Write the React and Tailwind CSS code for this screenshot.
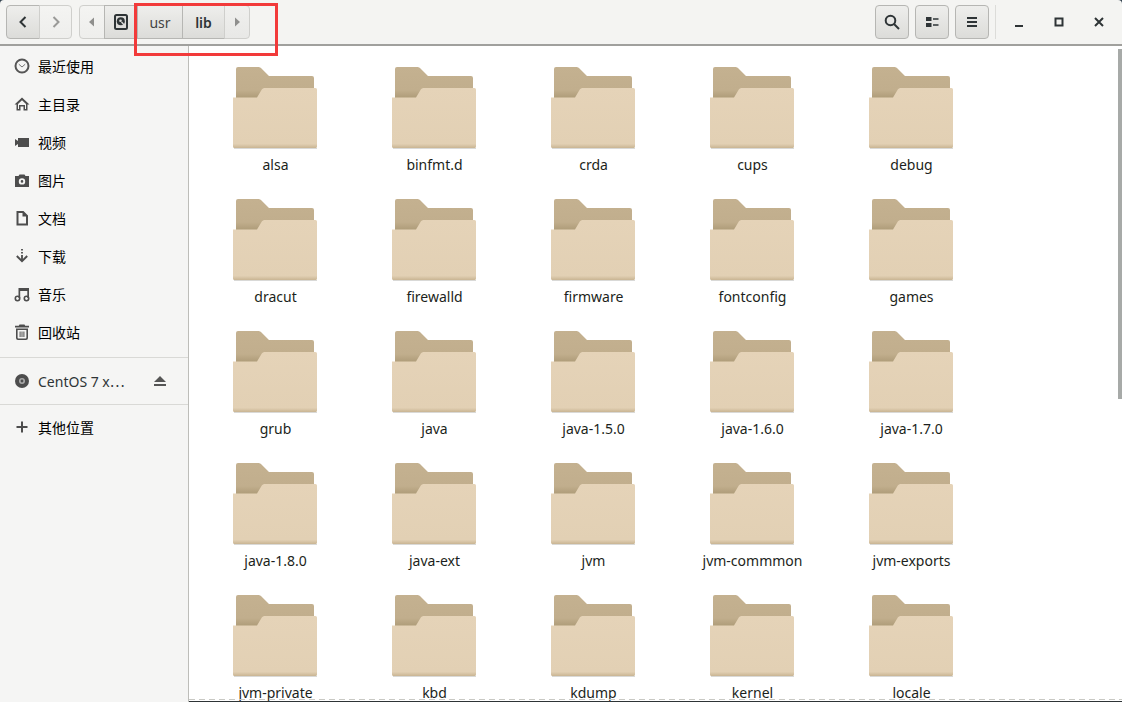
const sans = '"Noto Sans", "Noto Sans CJK SC", sans-serif';

const Folder = () => (
  <svg width="91" height="90" viewBox="0 0 91 90" className="block">
    <defs>
      <linearGradient id="back" x1="0" y1="0" x2="0" y2="1">
        <stop offset="0" stopColor="#c4b190" />
        <stop offset="0.7" stopColor="#c1ae8d" />
        <stop offset="1" stopColor="#a99773" />
      </linearGradient>
      <linearGradient id="front" x1="0" y1="0" x2="0" y2="1">
        <stop offset="0" stopColor="#e5d3b8" />
        <stop offset="0.93" stopColor="#e2d0b4" />
        <stop offset="1" stopColor="#c9b593" />
      </linearGradient>
    </defs>
    <path d="M6 5a2 2 0 0 1 2-2h20c1.500 0 2.500 .5 3.500 1.500L39 12h43a2 2 0 0 1 2 2v22H6Z" fill="url(#back)" />
    <path d="M4 84.500H87" stroke="#b5b5b0" strokeWidth="1" opacity="0.5" />
    <path d="M3 33.500h24l4.500-7.500c.6-1 1.500-2 3-2H85.500a1.500 1.500 0 0 1 1.500 1.500V82.500a1.500 1.500 0 0 1-1.500 1.500H4.500a1.500 1.500 0 0 1-1.500-1.500Z" fill="url(#front)" />
  </svg>
);

const IconWrap = ({ children }) => (
  <svg width="16" height="16" viewBox="0 0 16 16" fill="#4d4d4d" className="block shrink-0">
    {children}
  </svg>
);

const icons = {
  clock: (
    <>
      <circle cx="8" cy="8" r="6.500" fill="none" stroke="#555" strokeWidth="2" />
      <path d="M4.800 6.200 8 9l3.200-2.800" fill="none" stroke="#777" strokeWidth="1" />
    </>
  ),
  home: <path fillRule="evenodd" d="M8 1.500 0.500 8.500H2.500V14.500H6.500V10.500H9.500V14.500H13.500V8.500H15.500ZM8 4.200 4 7.900V13H5V9H11V13H12V7.900Z" />,
  video: <path d="M1 5l3 2V4h11v9H4v-3l-3 2Z" />,
  camera: <path fillRule="evenodd" d="M5.500 2.500h5l1 1.500H15v11H1V4h3.500ZM8 6.200a3.200 3.200 0 1 0 0 6.400 3.200 3.200 0 0 0 0-6.400Zm0 1.900a1.300 1.300 0 1 1 0 2.600 1.300 1.300 0 0 1 0-2.600Z" />,
  file: <path fillRule="evenodd" d="M2.500 1h7L14 5.500V15.500H2.500ZM4.500 3V13.500H12V6.500H8.500V3Z" />,
  download: (
    <>
      <path d="M7.100 1h1.800v1.500H7.100Zm0 3h1.800v1.500H7.100Zm0 3h1.800v5H7.100Z" />
      <path d="M2.800 8 8 13.200 13.200 8" fill="none" stroke="#4d4d4d" strokeWidth="1.900" />
    </>
  ),
  music: (
    <>
      <path d="M4.500 2H15V12H13.300V5H6.200V12H4.500Z" />
      <circle cx="3.500" cy="12.500" r="2.200" fill="none" stroke="#4d4d4d" strokeWidth="1.600" />
      <circle cx="12.500" cy="12.500" r="2.200" fill="none" stroke="#4d4d4d" strokeWidth="1.600" />
    </>
  ),
  trash: <path fillRule="evenodd" d="M5.500 0.500h5l.7 1.200H15v1.800H1V1.700h3.800ZM2 4.500h12V14a2 2 0 0 1-2 2H4a2 2 0 0 1-2-2Zm1.600 1.500V13.500c0 .6.400 1 1 1h6.800c.6 0 1-.4 1-1V6ZM5.600 7.500h1v5.500h-1Zm1.900 0h1v5.500h-1Zm1.900 0h1v5.500h-1Z" />,
  disc: (
    <>
      <circle cx="8" cy="8" r="7" fill="#4d4d4d" />
      <circle cx="8" cy="8" r="3" fill="#aaa" />
      <circle cx="8" cy="8" r="1.400" fill="#4d4d4d" />
    </>
  ),
  plus: <path d="M7 2.500h2V7h4.500v2H9v4.500H7V9H2.500V7H7Z" />,
};

const places = [
  ['clock', '最近使用'],
  ['home', '主目录'],
  ['video', '视频'],
  ['camera', '图片'],
  ['file', '文档'],
  ['download', '下载'],
  ['music', '音乐'],
  ['trash', '回收站'],
];

const folders = [
  'alsa', 'binfmt.d', 'crda', 'cups', 'debug',
  'dracut', 'firewalld', 'firmware', 'fontconfig', 'games',
  'grub', 'java', 'java-1.5.0', 'java-1.6.0', 'java-1.7.0',
  'java-1.8.0', 'java-ext', 'jvm', 'jvm-commmon', 'jvm-exports',
  'jvm-private', 'kbd', 'kdump', 'kernel', 'locale',
];

const btn = 'flex items-center justify-center h-[34px] border border-[#b6b6b3] bg-gradient-to-b from-[#eeeeec] to-[#dcdcd9]';

function Sidebar() {
  return (
    <aside className="w-[189px] shrink-0 bg-[#f5f5f4] border-r border-[#bdbdb9] flex flex-col pt-[1px] text-[14px] text-[#2e3436] overflow-hidden">
      {places.map(([icon, label]) => (
        <div key={label} className="h-[38px] flex items-center pl-[14px] gap-[8px]">
          <IconWrap>{icons[icon]}</IconWrap>
          <span className="text-black">{label}</span>
        </div>
      ))}
      <div className="h-px bg-[#d9d9d6] mt-[6px]" />
      <div className="h-[46px] flex items-center pl-[14px] gap-[8px]">
        <IconWrap>{icons.disc}</IconWrap>
        <span>CentOS 7 x⋯</span>
        <svg width="14" height="14" viewBox="0 0 14 14" fill="#555" className="ml-auto mr-[21px]">
          <path d="M7 2l6 6H1ZM1 10h12v2H1Z" />
        </svg>
      </div>
      <div className="h-px bg-[#d9d9d6]" />
      <div className="h-[44px] flex items-center pl-[14px] gap-[8px]">
        <IconWrap>{icons.plus}</IconWrap>
        <span className="text-black">其他位置</span>
      </div>
    </aside>
  );
}

function Toolbar() {
  return (
    <header className="h-[46px] shrink-0 flex items-center pl-[6px] rounded-t-[4px] bg-[#f4f4f2] border-b-2 border-[#a0a09d] relative text-[14px] text-[#2e3436]">
      <div className="flex">
        <div className={`${btn} w-[34px] rounded-l-[4px] from-[#e6e6e3] to-[#cfcfcc]`}>
          <svg width="16" height="16" viewBox="0 0 16 16" fill="none" stroke="#2e3436" strokeWidth="2"><path d="M10.500 3 5.500 8l5 5" /></svg>
        </div>
        <div className={`${btn} w-[33px] -ml-px rounded-r-[4px] from-[#f4f4f2] to-[#eeeeec] border-[#cfcfcc]`}>
          <svg width="16" height="16" viewBox="0 0 16 16" fill="none" stroke="#9a9a98" strokeWidth="2"><path d="M5.500 3l5 5-5 5" /></svg>
        </div>
      </div>
      <div className="flex ml-[7px]">
        <div className={`${btn} w-[26px] rounded-l-[4px] from-[#f4f4f2] to-[#eeeeec] border-[#cfcfcc]`}>
          <svg width="10" height="12" viewBox="0 0 10 12" fill="#8f8f8d"><path d="M7 1.500v9L2 6Z" /></svg>
        </div>
        <div className={`${btn} w-[34px] -ml-px from-[#dededb] to-[#d0d0cd]`}>
          <svg width="14" height="16" viewBox="0 0 14 16">
            <rect x="1" y="1" width="12" height="14" rx="1.500" fill="#dddddb" stroke="#2e3436" strokeWidth="2" />
            <circle cx="6.800" cy="7.200" r="4" fill="#2e3436" />
            <circle cx="6.500" cy="6.800" r="1.300" fill="#dddddb" />
            <path d="M7.500 8 11 12" stroke="#dddddb" strokeWidth="1.300" />
          </svg>
        </div>
        <div className={`${btn} w-[46px] -ml-px text-[#444]`}>usr</div>
        <div className={`${btn} w-[43px] -ml-px font-semibold from-[#dededc] to-[#d6d6d3]`}>lib</div>
        <div className={`${btn} w-[26px] -ml-px rounded-r-[4px] from-[#f0f0ee] to-[#e8e8e6] border-[#cfcfcc]`}>
          <svg width="10" height="12" viewBox="0 0 10 12" fill="#8f8f8d"><path d="M3 1.500v9L8 6Z" /></svg>
        </div>
      </div>

      <div className="ml-auto flex items-center">
        <div className={`${btn} w-[34px] rounded-[4px]`}>
          <svg width="16" height="16" viewBox="0 0 16 16" fill="none" stroke="#2e3436" strokeWidth="2"><circle cx="6.500" cy="6.500" r="4.800" /><path d="M10 10l5 5" /></svg>
        </div>
        <div className={`${btn} w-[34px] rounded-[4px] ml-[6px]`}>
          <svg width="14" height="12" viewBox="0 0 14 12" fill="#2e3436"><path d="M1 1h5.500v4H1ZM1 7h5.500v4H1ZM8 2.200h5.500v1.600H8ZM8 8.200h5.500v1.600H8Z" /></svg>
        </div>
        <div className={`${btn} w-[34px] rounded-[4px] ml-[6px]`}>
          <svg width="12" height="12" viewBox="0 0 12 12" fill="#2e3436"><path d="M1 1h10v2H1ZM1 5h10v2H1ZM1 9h10v2H1Z" /></svg>
        </div>
        <div className="w-px h-[34px] bg-[#dcdcd9] ml-[6px]" />
        <div className="w-[40px] h-[34px] ml-[3px] flex items-center justify-center">
          <svg width="10" height="10" viewBox="0 0 10 10" fill="#2e3436"><path d="M1 7h8v2H1Z" transform="translate(0 1)" /></svg>
        </div>
        <div className="w-[40px] h-[34px] flex items-center justify-center">
          <svg width="10" height="10" viewBox="0 0 10 10" fill="none" stroke="#2e3436" strokeWidth="2"><rect x="1.500" y="1.500" width="7" height="7" /></svg>
        </div>
        <div className="w-[40px] h-[34px] mr-[3px] flex items-center justify-center">
          <svg width="10" height="10" viewBox="0 0 10 10" fill="none" stroke="#2e3436" strokeWidth="2"><path d="M1 1l8 8M9 1l-8 8" /></svg>
        </div>
      </div>

      {/* red annotation box drawn over the toolbar */}
      <div className="absolute left-[134px] top-[3px] w-[144px] h-[53px] border-[3px] border-[#f23a3a] z-10 pointer-events-none" />
    </header>
  );
}

export default function App() {
  return (
    <div className="w-[1122px] h-[702px] flex flex-col overflow-hidden bg-[#33424f]" style={{ fontFamily: sans }}>
      <Toolbar />
      <div className="flex flex-1 min-h-0">
        <Sidebar />
        <main className="flex-1 relative overflow-hidden bg-white">
          <div className="grid grid-cols-[repeat(5,159px)] auto-rows-[132px] pl-[7px] pt-[18px]">
            {folders.map((name) => (
              <div key={name} className="flex flex-col items-center">
                <Folder />
                <span className="text-[14px] leading-[20px] mt-[1px] text-[#1c1f20]">{name}</span>
              </div>
            ))}
          </div>
          <div className="absolute right-0 top-[3px] w-[4px] h-[350px] bg-[#a7aaa8]" />
          <div className="absolute left-0 right-0 bottom-[2px] h-px bg-[repeating-linear-gradient(90deg,#c9c9c4_0_6px,transparent_6px_10px)]" />
          <div className="absolute left-0 right-0 bottom-0 h-px bg-[#2e3436]" />
        </main>
      </div>
    </div>
  );
}
